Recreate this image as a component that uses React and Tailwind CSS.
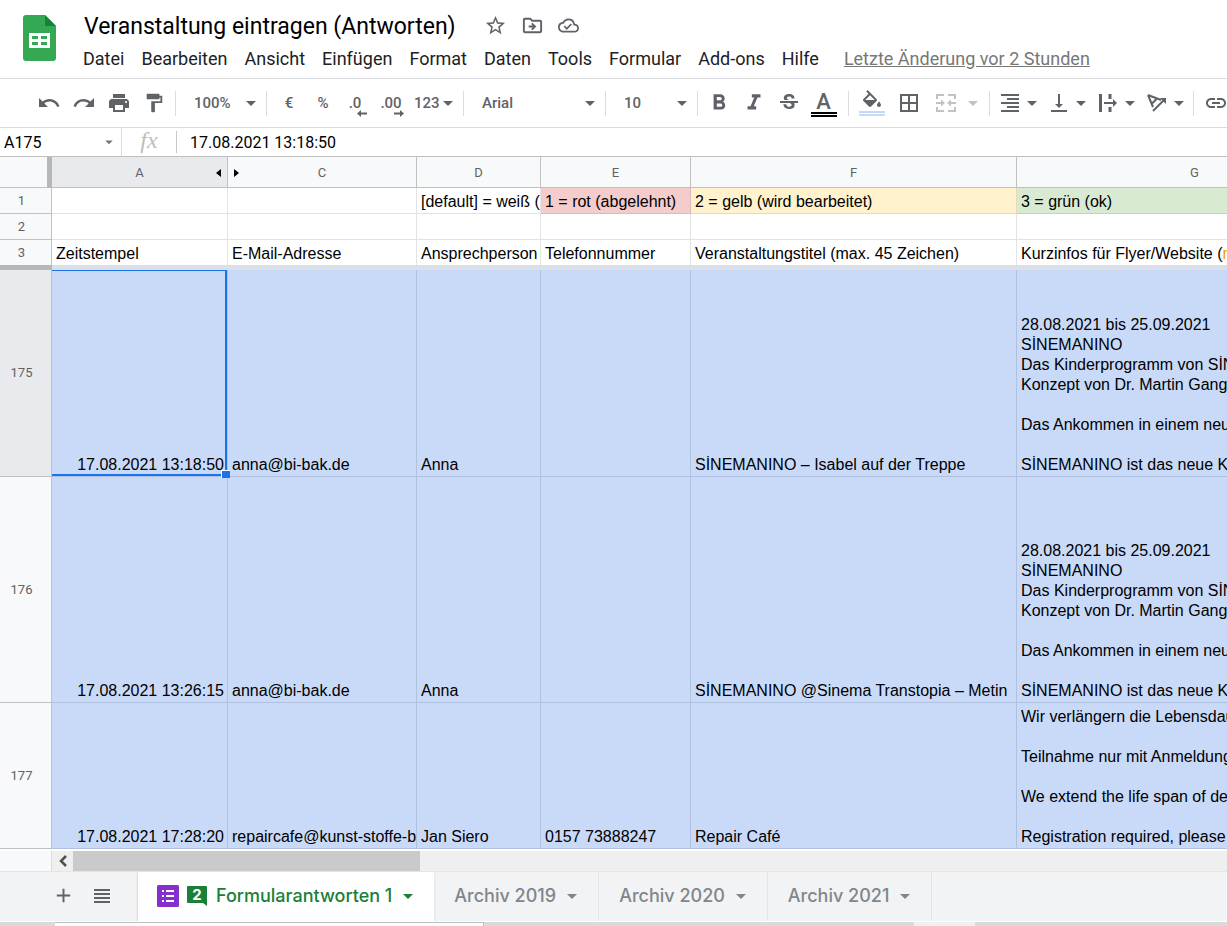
import React, { useState } from "react";
import {
  MdAdd,
  MdArrowDropDown,
  MdBorderAll,
  MdFormatAlignRight,
  MdFormatBold,
  MdFormatItalic,
  MdFormatPaint,
  MdLink,
  MdOutlineCloudDone,
  MdOutlineDriveFileMove,
  MdPrint,
  MdRedo,
  MdStarBorder,
  MdStrikethroughS,
  MdUndo,
  MdVerticalAlignBottom,
} from "react-icons/md";

const MENU = ["Datei", "Bearbeiten", "Ansicht", "Einfügen", "Format", "Daten", "Tools", "Formular", "Add-ons", "Hilfe"];

const COLUMNS = [
  { id: "A", width: "w-[176px]" },
  { id: "C", width: "w-[189px]" },
  { id: "D", width: "w-[124px]" },
  { id: "E", width: "w-[150px]" },
  { id: "F", width: "w-[326px]" },
  { id: "G", width: "w-[356px]" },
];

const SINEMA_INFO = `28.08.2021 bis 25.09.2021
SİNEMANINO
Das Kinderprogramm von SİN
Konzept von Dr. Martin Gang

Das Ankommen in einem neu

SİNEMANINO ist das neue K`;

const REPAIR_INFO = `Wir verlängern die Lebensdau

Teilnahme nur mit Anmeldung

We extend the life span of de

Registration required, please`;

const FROZEN_ROWS = [
  {
    id: 1,
    height: "h-[26px]",
    cells: ["", "", "[default] = weiß (", "1 = rot (abgelehnt)", "2 = gelb (wird bearbeitet)", "3 = grün (ok)"],
    fills: {
      3: "bg-[#f4cccc] border-[#dfb9b9]",
      4: "bg-[#fff2cc] border-[#e8dab5]",
      5: "bg-[#d9ead3] border-[#c2d3bc]",
    },
  },
  { id: 2, height: "h-[26px]", cells: ["", "", "", "", "", ""] },
  {
    id: 3,
    height: "h-[25px]",
    last: true,
    cells: [
      "Zeitstempel",
      "E-Mail-Adresse",
      "Ansprechperson",
      "Telefonnummer",
      "Veranstaltungstitel (max. 45 Zeichen)",
      <>
        Kurzinfos für Flyer/Website (<span className="text-[#ff9900]">m</span>
      </>,
    ],
  },
];

const DATA_ROWS = [
  {
    id: 175,
    height: "h-[207px]",
    active: true,
    cells: ["17.08.2021 13:18:50", "anna@bi-bak.de", "Anna", "", "SİNEMANINO – Isabel auf der Treppe", SINEMA_INFO],
  },
  {
    id: 176,
    height: "h-[226px]",
    cells: ["17.08.2021 13:26:15", "anna@bi-bak.de", "Anna", "", "SİNEMANINO @Sinema Transtopia – Metin", SINEMA_INFO],
  },
  {
    id: 177,
    height: "h-[146px]",
    cells: ["17.08.2021 17:28:20", "repaircafe@kunst-stoffe-be", "Jan Siero", "0157 73888247", "Repair Café", REPAIR_INFO],
  },
];

const SHEETS = ["Archiv 2019", "Archiv 2020", "Archiv 2021"];

function SheetsLogo() {
  return (
    <svg className="w-[33px] h-[46px] shrink-0" viewBox="0 0 33 46" aria-hidden="true">
      <path fill="#34a853" d="M3 0h19l11 11v32a3 3 0 0 1-3 3H3a3 3 0 0 1-3-3V3a3 3 0 0 1 3-3z" />
      <path fill="#188038" d="M22 0l11 11H22z" />
      <path fill="#fff" fillRule="evenodd" d="M6 18h21v15H6zM9 21v3h6v-3zM18 21v3h6v-3zM9 27v3h6v-3zM18 27v3h6v-3z" />
    </svg>
  );
}

function MergeIcon() {
  return (
    <svg className="w-[22px] h-5" viewBox="0 0 22 20" fill="none" stroke="currentColor" strokeWidth="2" aria-hidden="true">
      <path d="M9 2H2v4M13 2h7v4M9 18H2v-4M13 18h7v-4" />
      <path d="M1 10h6M21 10h-6" />
      <path fill="currentColor" stroke="none" d="M6 6.500l4 3.500-4 3.500zM16 6.500l-4 3.500 4 3.500z" />
    </svg>
  );
}

function OverflowIcon() {
  return (
    <svg className="w-5 h-5" viewBox="0 0 20 20" fill="none" stroke="currentColor" strokeWidth="2" aria-hidden="true">
      <path strokeWidth="3" d="M2.500 1v18M12 1v5M12 14v5" />
      <path d="M6 10h10" />
      <path fill="currentColor" stroke="none" d="M15 6l4 4-4 4z" />
    </svg>
  );
}

function RotateIcon() {
  return (
    <svg className="w-5 h-5" viewBox="0 0 20 20" fill="none" stroke="currentColor" strokeWidth="2" aria-hidden="true">
      <path d="M1 2l13 5M1 2l5 12M10 5.500l-5 5" />
      <path d="M6 18L17 7" />
      <path fill="currentColor" stroke="none" d="M13 5h6v6z" />
    </svg>
  );
}

function FillIcon() {
  return (
    <svg className="w-6 h-6" viewBox="0 0 24 24" fill="currentColor" aria-hidden="true">
      <path d="M16.560 8.940L7.620 0 6.210 1.410l2.380 2.380-5.150 5.150c-.59.59-.59 1.540 0 2.120l5.500 5.500c.29.29.68.44 1.060.44s.77-.15 1.060-.44l5.500-5.500c.59-.58.59-1.530 0-2.120zM5.210 10L10 5.210 14.790 10H5.210zM19 11.500s-2 2.170-2 3.500c0 1.100.9 2 2 2s2-.9 2-2c0-1.330-2-3.500-2-3.500z" />
    </svg>
  );
}

function DecimalArrow({ flip }) {
  return (
    <svg
      className={`absolute -right-[2px] -bottom-[3px] w-[10px] h-[7px] ${flip ? "rotate-180" : ""}`}
      viewBox="0 0 10 7"
      fill="currentColor"
      aria-hidden="true"
    >
      <path d="M4 0v2.500h6v2H4V7L0 3.500z" />
    </svg>
  );
}

function Separator() {
  return <div className="w-px h-[25px] shrink-0 bg-[#dadce0]" />;
}

function ToolButton({ label, width = "w-[35px]", children }) {
  return (
    <button aria-label={label} className={`${width} h-9 shrink-0 flex items-center justify-center hover:bg-gray-100`}>
      {children}
    </button>
  );
}

function ToolMenu({ label, children }) {
  return (
    <button aria-label={label} className="w-[49px] h-9 shrink-0 flex items-center hover:bg-gray-100">
      <span className="w-[26px] flex justify-center">{children}</span>
      <MdArrowDropDown className="w-6 h-6 shrink-0 -ml-[3px]" />
    </button>
  );
}

function ToolSelect({ label, width, options }) {
  return (
    <div className={`${width} relative shrink-0 flex items-center`}>
      <select aria-label={label} className="w-full h-9 pl-[18px] appearance-none bg-transparent outline-none">
        {options.map((option) => (
          <option key={option}>{option}</option>
        ))}
      </select>
      <MdArrowDropDown className="absolute right-[3px] w-6 h-6 pointer-events-none" />
    </div>
  );
}

function Header() {
  return (
    <header className="flex items-start h-[79px] pl-[23px] pt-[10px] gap-[27px] border-b border-[#dadce0]">
      <div className="pt-[5px]">
        <SheetsLogo />
      </div>
      <div className="min-w-0">
        <div className="flex items-center h-8">
          <h1 className="pl-px pt-[2px] text-[23px] text-black whitespace-nowrap">
            Veranstaltung eintragen (Antworten)
          </h1>
          <div className="flex items-center gap-[14px] pb-[2px] pl-7 text-[#5f6368]">
            <button aria-label="Markieren"><MdStarBorder className="w-[23px] h-[23px]" /></button>
            <button aria-label="Verschieben"><MdOutlineDriveFileMove className="w-[23px] h-[23px]" /></button>
            <button aria-label="Dokumentstatus"><MdOutlineCloudDone className="w-[21px] h-[21px]" /></button>
          </div>
        </div>
        <nav className="flex items-center h-[34px] gap-[17px] text-lg text-[#202124] whitespace-nowrap">
          {MENU.map((item) => (
            <button key={item}>{item}</button>
          ))}
          <a href="#verlauf" className="ml-2 text-[#777777] underline">
            Letzte Änderung vor 2 Stunden
          </a>
        </nav>
      </div>
    </header>
  );
}

function Toolbar() {
  return (
    <div className="flex items-center h-[49px] pl-[31px] border-b border-[#dadce0] text-[15px] font-medium text-[#5f6368] overflow-hidden">
      <div className="flex shrink-0 pr-1">
        <ToolButton label="Rückgängig"><MdUndo className="w-6 h-6" /></ToolButton>
        <ToolButton label="Wiederholen"><MdRedo className="w-6 h-6" /></ToolButton>
        <ToolButton label="Drucken"><MdPrint className="w-6 h-6" /></ToolButton>
        <ToolButton label="Format übertragen"><MdFormatPaint className="w-[22px] h-[22px]" /></ToolButton>
      </div>
      <Separator />
      <ToolSelect label="Zoom" width="w-[90px]" options={["100%", "75%", "50%"]} />
      <Separator />
      <div className="flex shrink-0 pl-[5px]">
        <ToolButton label="Als Währung formatieren" width="w-[34px]">€</ToolButton>
        <ToolButton label="Als Prozent formatieren" width="w-[34px]">%</ToolButton>
        <ToolButton label="Dezimalstelle löschen" width="w-[34px]">
          <span className="relative pr-1">.0<DecimalArrow /></span>
        </ToolButton>
        <ToolButton label="Dezimalstelle hinzufügen" width="w-[34px]">
          <span className="relative">.00<DecimalArrow flip /></span>
        </ToolButton>
        <button className="w-[55px] h-9 pl-[6px] flex items-center">
          123
          <MdArrowDropDown className="w-6 h-6 shrink-0 -mx-1" />
        </button>
      </div>
      <Separator />
      <ToolSelect label="Schriftart" width="w-[141px]" options={["Arial", "Roboto", "Verdana"]} />
      <Separator />
      <ToolSelect label="Schriftgröße" width="w-[91px]" options={["10", "11", "12"]} />
      <Separator />
      <div className="flex shrink-0 pl-[3px] pr-[7px]">
        <ToolButton label="Fett"><MdFormatBold className="w-[26px] h-[26px]" /></ToolButton>
        <ToolButton label="Kursiv"><MdFormatItalic className="w-[26px] h-[26px]" /></ToolButton>
        <ToolButton label="Durchgestrichen"><MdStrikethroughS className="w-6 h-6" /></ToolButton>
        <ToolButton label="Textfarbe">
          <span className="flex flex-col items-center pt-[2px]">
            <span className="text-[22px] leading-5">A</span>
            <span className="w-[26px] h-[5px] border-y-2 border-black" />
          </span>
        </ToolButton>
      </div>
      <Separator />
      <div className="flex shrink-0 pl-1 pr-2">
        <ToolButton label="Füllfarbe" width="w-[37px]">
          <span className="flex flex-col items-center">
            <span className="h-[21px]"><FillIcon /></span>
            <span className="w-[26px] h-[5px] border-y-2 border-[#c9daf8]" />
          </span>
        </ToolButton>
        <ToolButton label="Rahmen" width="w-[37px]"><MdBorderAll className="w-6 h-6" /></ToolButton>
        <button aria-label="Zellen verbinden" disabled className="flex items-center text-[#c0c2c5]">
          <span className="w-[37px] flex justify-center"><MergeIcon /></span>
          <span className="w-[17px] flex justify-center"><MdArrowDropDown className="w-6 h-6 shrink-0" /></span>
        </button>
      </div>
      <Separator />
      <div className="flex shrink-0 pl-[7px]">
        <ToolMenu label="Horizontal ausrichten"><MdFormatAlignRight className="w-6 h-6" /></ToolMenu>
        <ToolMenu label="Vertikal ausrichten"><MdVerticalAlignBottom className="w-6 h-6" /></ToolMenu>
        <ToolMenu label="Textumbruch"><OverflowIcon /></ToolMenu>
        <ToolMenu label="Textdrehung"><RotateIcon /></ToolMenu>
      </div>
      <Separator />
      <div className="flex shrink-0 pl-1">
        <ToolButton label="Link einfügen"><MdLink className="w-6 h-6" /></ToolButton>
      </div>
    </div>
  );
}

function FormulaBar() {
  const [formula, setFormula] = useState("17.08.2021 13:18:50");

  return (
    <div className="flex items-center h-[29px] border-b border-[#c0c0c0] text-base text-black">
      <div className="flex items-center w-[121px] shrink-0 pl-1">
        <input aria-label="Namenfeld" defaultValue="A175" className="w-0 flex-1 pt-px outline-none" />
        <button aria-label="Benannte Bereiche" className="pr-[3px] text-[#777777]">
          <MdArrowDropDown className="w-[18px] h-[18px]" />
        </button>
      </div>
      <div className="w-px h-full bg-[#dadce0]" />
      <span className="w-[54px] shrink-0 pb-1 text-center font-['Liberation_Serif',serif] italic text-2xl leading-6 text-[#bdbdbd]">
        fx
      </span>
      <div className="w-px h-[22px] bg-[#c8c8c8]" />
      <input
        aria-label="Formel"
        value={formula}
        onChange={(e) => setFormula(e.target.value)}
        className="flex-1 min-w-0 pl-[13px] pt-px outline-none"
      />
    </div>
  );
}

function Cell({ row, index, value, selected }) {
  const fill = row.fills?.[index];
  let colors = "border-[#e2e3e3]";
  if (selected) colors = "bg-[#c9daf8] border-[#b0c1e0]";
  if (fill) colors = fill;

  return (
    <td className={`relative p-0 align-bottom border-r ${row.last ? "" : "border-b"} ${colors}`}>
      <div className={`overflow-hidden whitespace-pre leading-5 pb-px pl-1 pr-[3px] ${selected && index === 0 ? "text-right" : ""}`}>
        {value}
      </div>
      {row.active && index === 0 && (
        <div className="absolute inset-0 z-10 border-t border-r-2 border-b-2 border-[#1a73e8] pointer-events-none">
          <div className="absolute -right-[5px] -bottom-1 w-[9px] h-2 bg-[#1a73e8] border-t border-l border-white" />
        </div>
      )}
    </td>
  );
}

function Row({ row, selected }) {
  return (
    <tr className={row.height}>
      <th
        scope="row"
        className={`p-0 pr-2 font-[Roboto,sans-serif] text-[13px] font-normal text-[#5f6368] border-r border-[#c0c0c0] ${row.last ? "" : "border-b"} ${row.active ? "bg-[#e8eaed]" : "bg-[#f8f9fa]"}`}
      >
        {row.id}
      </th>
      {row.cells.map((value, index) => (
        <Cell key={COLUMNS[index].id} row={row} index={index} value={value} selected={selected} />
      ))}
    </tr>
  );
}

function Grid() {
  return (
    <div className="overflow-hidden">
      <table className="table-fixed w-[1373px] border-separate border-spacing-0 font-['Liberation_Sans',Arial,sans-serif] text-base text-black">
        <colgroup>
          <col className="w-[52px]" />
          {COLUMNS.map((col) => (
            <col key={col.id} className={col.width} />
          ))}
        </colgroup>
        <thead>
          <tr className="h-[31px] font-[Roboto,sans-serif] text-[13px] text-[#5f6368]">
            <th aria-label="Alles auswählen" className="p-0 bg-[#f8f9fa] border-r-[5px] border-b border-r-[#b7b7b7] border-b-[#c0c0c0]" />
            {COLUMNS.map((col) => (
              <th
                key={col.id}
                scope="col"
                className={`relative p-0 pt-px font-normal border-r border-b border-[#c0c0c0] ${col.id === "A" ? "bg-[#e8eaed]" : "bg-[#f8f9fa]"}`}
              >
                {col.id}
                {col.id === "A" && (
                  <svg className="absolute right-[6px] top-3 w-[5px] h-2" viewBox="0 0 5 8" aria-hidden="true">
                    <path d="M5 0v8L0 4z" />
                  </svg>
                )}
                {col.id === "C" && (
                  <svg className="absolute left-[6px] top-3 w-[5px] h-2" viewBox="0 0 5 8" aria-hidden="true">
                    <path d="M0 0v8l5-4z" />
                  </svg>
                )}
              </th>
            ))}
          </tr>
        </thead>
        <tbody>
          {FROZEN_ROWS.map((row) => (
            <Row key={row.id} row={row} />
          ))}
          {/* freeze bar */}
          <tr className="h-[5px]" aria-hidden="true">
            <td className="p-0 bg-[#b7b7b7]" />
            <td colSpan={6} className="p-0 bg-[#dadfe8]" />
          </tr>
          {DATA_ROWS.map((row) => (
            <Row key={row.id} row={row} selected />
          ))}
        </tbody>
      </table>
    </div>
  );
}

function ScrollBar() {
  return (
    <div className="flex h-[22px] pt-[2px]">
      <div className="w-[52px] shrink-0 bg-[#f8f9fa] border-r border-[#dadce0]" />
      <div className="flex flex-1 bg-[#efefef]">
        <button aria-label="Nach links scrollen" className="w-[21px] flex items-center justify-center text-[#505050]">
          <svg className="w-2 h-3" viewBox="0 0 8 12" fill="none" stroke="currentColor" strokeWidth="2.500" aria-hidden="true">
            <path d="M7 1L2 6l5 5" />
          </svg>
        </button>
        <div className="w-[29.5%] bg-[#cacaca]" />
      </div>
    </div>
  );
}

function SheetTabs() {
  return (
    <div className="flex h-[51px] bg-[#f1f3f4] border-t border-[#e3e5e8] border-b border-b-white font-[Inter,sans-serif] text-lg font-medium whitespace-nowrap overflow-hidden">
      <div className="flex items-center w-[138px] shrink-0 pl-[52px] pb-[2px] gap-[19px] text-[#5f6368] border-r border-[#e3e5e8]">
        <button aria-label="Tabellenblatt hinzufügen"><MdAdd className="w-[23px] h-[23px]" /></button>
        <button aria-label="Alle Tabellenblätter">
          <svg className="w-4 h-[14px]" viewBox="0 0 16 14" fill="currentColor" aria-hidden="true">
            <path d="M0 0h16v2H0zM0 4h16v2H0zM0 8h16v2H0zM0 12h16v2H0z" />
          </svg>
        </button>
      </div>
      <button className="flex items-center shrink-0 pl-[19px] pr-[14px] pb-[2px] bg-white text-[#188038] shadow-sm">
        <svg className="w-[22px] h-[22px]" viewBox="0 0 22 22" aria-hidden="true">
          <rect width="22" height="22" rx="1.500" fill="#8430ce" />
          <path fill="#fff" d="M5 5h2v2H5zM9 5h8v2H9zM5 10h2v2H5zM9 10h8v2H9zM5 15h2v2H5zM9 15h8v2H9z" />
        </svg>
        <span className="relative flex items-center justify-center w-5 h-5 ml-2 mr-[9px]">
          <svg className="absolute inset-0 w-5 h-5" viewBox="0 0 20 20" aria-hidden="true">
            <path fill="#188038" d="M1 0h18a1 1 0 0 1 1 1v19l-4-3H1a1 1 0 0 1-1-1V1a1 1 0 0 1 1-1z" />
          </svg>
          <span className="relative pb-[2px] text-[15px] font-bold leading-4 text-white">2</span>
        </span>
        Formularantworten 1
        <MdArrowDropDown className="w-6 h-6 ml-1" />
      </button>
      {SHEETS.map((name) => (
        <button key={name} className="flex items-center shrink-0 pl-5 pr-[14px] pb-[2px] text-[#80868b] border-r border-[#e3e5e8]">
          {name}
          <MdArrowDropDown className="w-6 h-6 ml-1" />
        </button>
      ))}
    </div>
  );
}

function App() {
  return (
    <div className="w-full overflow-hidden bg-white font-[Roboto,sans-serif]">
      <Header />
      <Toolbar />
      <FormulaBar />
      <Grid />
      <ScrollBar />
      <SheetTabs />
      {/* window edge below the tabs */}
      <div className="flex h-1 bg-[#d9dadc]">
        <div className="w-[4%] min-w-[55px]" />
        <div className="w-[35%] bg-white border-t border-r border-[#bdbdbd]" />
        <div className="w-[35%]" />
        <div className="w-[5%] bg-[#f0f0f0]" />
      </div>
    </div>
  );
}

export default App;
